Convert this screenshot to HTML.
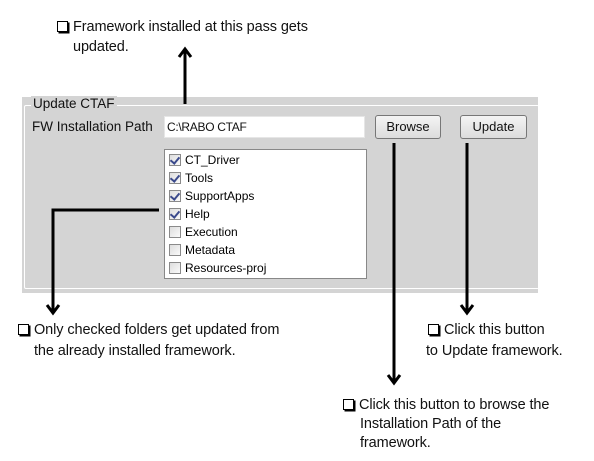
<!DOCTYPE html>
<html><head><meta charset="utf-8"><style>
body{margin:0;width:594px;height:461px;background:#fff;position:relative;overflow:hidden;font-family:"Liberation Sans",sans-serif;}
.t{position:absolute;font-size:14.5px;color:#111;white-space:nowrap;letter-spacing:-0.1px;line-height:20px}
.bx{display:inline-block;width:9px;height:9px;border:1px solid #000;box-shadow:1.5px 1.5px 0 #000;margin-right:5px;vertical-align:-1px}
.panel{position:absolute;left:22px;top:97px;width:516px;height:196px;background:#d4d4d4}
.grp{position:absolute;left:24px;top:105px;width:514px;height:182px;border:1px solid #fff;border-right:none;border-radius:2px}
.ui{position:absolute;font-size:12px;color:#111}
.tb{position:absolute;left:164px;top:116px;width:201px;height:22px;background:#fff;border:1px solid #e6e6e6;box-sizing:border-box}
.btn{position:absolute;top:115px;height:24px;box-sizing:border-box;border:1px solid #777;border-radius:3px;background:linear-gradient(#f4f4f4,#dcdcdc);font-size:13px;text-align:center;line-height:21px;color:#111}
.lb{position:absolute;left:164px;top:149px;width:203px;height:130px;background:#fff;border:1px solid #888;box-sizing:border-box}
.row{position:absolute;left:4px;font-size:12px;height:18px;line-height:18px}
.cb{display:inline-block;width:10px;height:10px;border:1px solid #8a8a8a;background:linear-gradient(135deg,#ddd,#fafafa);vertical-align:-2px;margin-right:4px;position:relative}
.ck::after{content:"";position:absolute;left:2px;top:0px;width:4px;height:7px;border:solid #3b4a8c;border-width:0 2px 2px 0;transform:rotate(40deg)}
</style></head><body>
<div class="t" style="left:57px;top:17px"><span class="bx"></span>Framework installed at this pass gets</div>
<div class="t" style="left:73px;top:37px">updated.</div>

<div class="panel"></div>
<div class="grp"></div>
<div class="ui" style="left:31px;top:96px;background:#d4d4d4;padding:0 2px;font-size:13.5px">Update CTAF</div>
<div class="ui" style="left:32px;top:119px;font-size:13.5px">FW Installation Path</div>
<div class="tb"></div>
<div class="ui" style="left:167px;top:120px;font-size:12px;letter-spacing:-0.3px">C:\RABO CTAF</div>
<div class="btn" style="left:375px;width:66px">Browse</div>
<div class="btn" style="left:460px;width:67px">Update</div>
<div class="lb">
<div class="row" style="top:1px"><span class="cb ck"></span>CT_Driver</div>
<div class="row" style="top:19px"><span class="cb ck"></span>Tools</div>
<div class="row" style="top:37px"><span class="cb ck"></span>SupportApps</div>
<div class="row" style="top:55px"><span class="cb ck"></span>Help</div>
<div class="row" style="top:73px"><span class="cb"></span>Execution</div>
<div class="row" style="top:91px"><span class="cb"></span>Metadata</div>
<div class="row" style="top:109px"><span class="cb"></span>Resources-proj</div>
</div>

<svg width="594" height="461" style="position:absolute;left:0;top:0" fill="none" stroke="#000" stroke-width="3">
<line x1="185" y1="104" x2="185" y2="50"/><polyline points="179,57 185,49 191,57"/>
<polyline points="159,210 53,210 53,313"/><polyline points="47,305 53,313 59,305"/>
<line x1="394" y1="143" x2="394" y2="383"/><polyline points="388,375 394,383 400,375"/>
<line x1="467" y1="143" x2="467" y2="313"/><polyline points="461,305 467,313 473,305"/>
</svg>

<div class="t" style="left:18px;top:320px"><span class="bx"></span>Only checked folders get updated from</div>
<div class="t" style="left:34px;top:341px">the already installed framework.</div>
<div class="t" style="left:428px;top:320px"><span class="bx"></span>Click this button</div>
<div class="t" style="left:426px;top:341px">to Update framework.</div>
<div class="t" style="left:343px;top:395px"><span class="bx"></span>Click this button to browse the</div>
<div class="t" style="left:360px;top:414px">Installation Path of the</div>
<div class="t" style="left:360px;top:433px">framework.</div>
</body></html>
